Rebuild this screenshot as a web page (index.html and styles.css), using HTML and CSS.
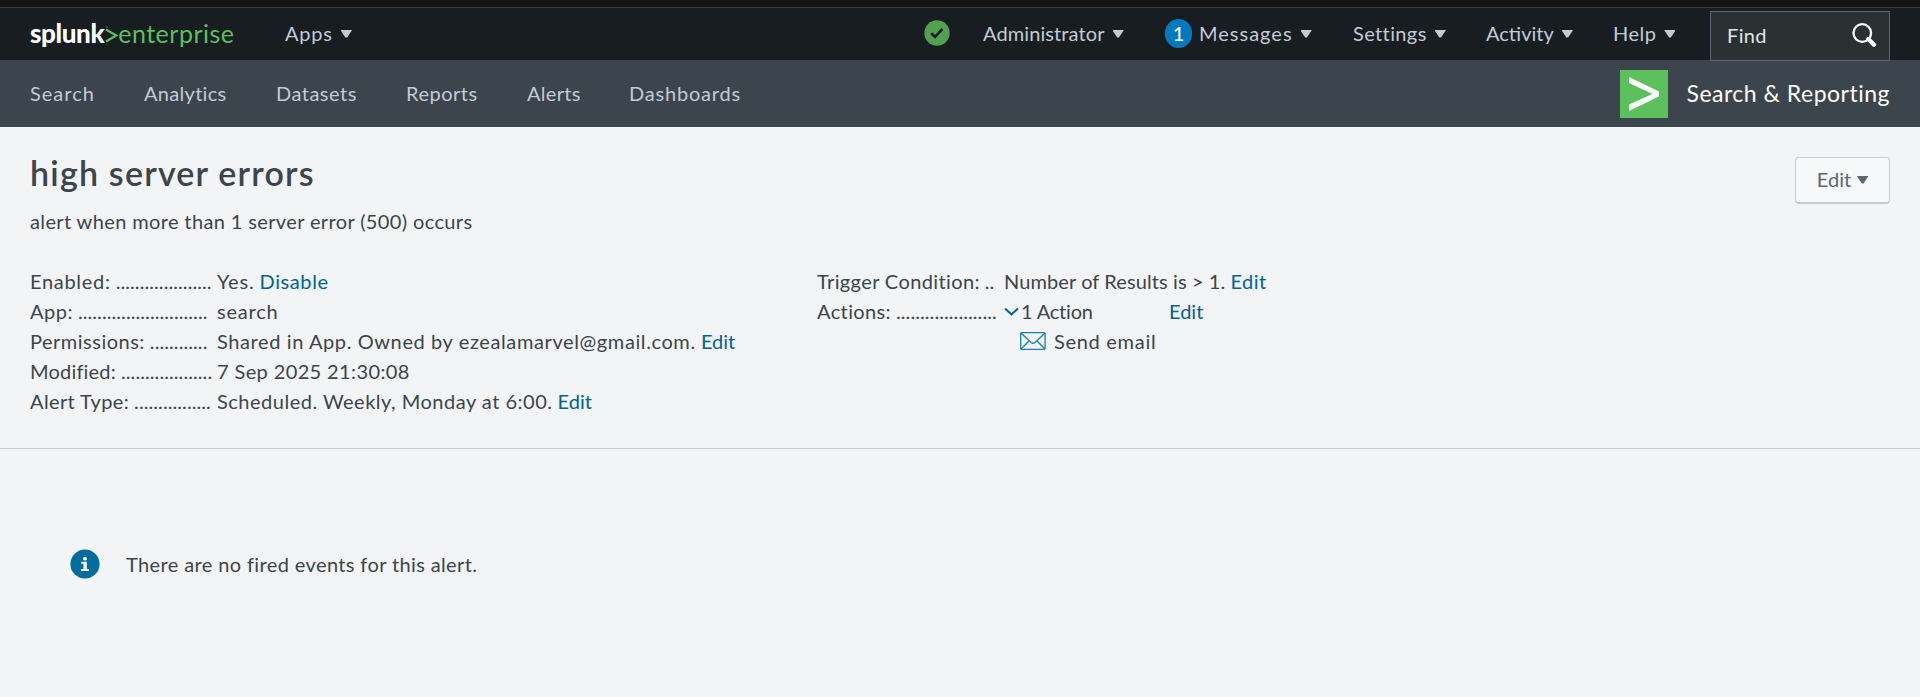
FILE: index.html
```
<!DOCTYPE html>
<html lang="en">
<head>
<meta charset="utf-8">
<title>high server errors | Splunk</title>
<link rel="stylesheet" href="styles.css">
</head>
<body>
<div class="window-edge"></div>
<header class="topbar">
  <div class="topbar-left">
    <a class="logo"><span class="logo-splunk">splunk</span><svg class="logo-mark" width="13" height="20" viewBox="0 0 13 20"><path d="M1 4.5 11.2 10.5 1 16.5" fill="none" stroke="#5cc05c" stroke-width="2.3"/><circle cx="2" cy="2" r="1" fill="#2d6b35"/></svg><span class="logo-product">enterprise</span></a>
    <a class="menu"><span class="ls-8">Apps</span><i class="caret"></i></a>
  </div>
  <nav class="topbar-right">
    <svg class="health" width="26" height="26" viewBox="0 0 26 26"><circle cx="13" cy="13" r="12.7" fill="#53a051"/><path d="M7.2 13.2 11 16.8 18.3 9.2" fill="none" stroke="#171d21" stroke-width="2.6"/></svg>
    <a class="menu"><span class="ls-1">Administrator</span><i class="caret"></i></a>
    <a class="menu"><b class="badge">1</b><span class="ls-10">Messages</span><i class="caret"></i></a>
    <a class="menu"><span class="ls-4">Settings</span><i class="caret"></i></a>
    <a class="menu"><span class="ls-0">Activity</span><i class="caret"></i></a>
    <a class="menu"><span class="ls-5">Help</span><i class="caret"></i></a>
    <div class="find"><span class="ls-4">Find</span><svg width="25" height="25" viewBox="0 0 25 25"><circle cx="10.3" cy="10" r="8.8" fill="none" stroke="#fff" stroke-width="2.3"/><path d="M16.3 16 22 21.7" stroke="#fff" stroke-width="4.4" stroke-linecap="round"/></svg></div>
  </nav>
</header>
<div class="appbar">
  <nav class="tabs">
    <a class="ls-10">Search</a><a class="ls-3">Analytics</a><a class="ls-5">Datasets</a><a class="ls-5">Reports</a><a class="ls-3">Alerts</a><a class="ls-8">Dashboards</a>
  </nav>
  <div class="app">
    <svg width="48" height="48" viewBox="0 0 48 48"><rect width="48" height="48" fill="#5cc05c"/><path d="M9 7 39 21.5V26.500L9 41V34.500L32.500 24 9 13Z" fill="#fff"/></svg>
    <span class="app-name">Search &amp; Reporting</span>
  </div>
</div>
<main>
  <section class="summary">
    <div class="heading">
      <div>
        <h1>high server errors</h1>
        <p>alert when more than 1 server error (500) occurs</p>
      </div>
      <button class="edit"><span>Edit</span><i class="caret"></i></button>
    </div>
    <div class="details">
      <dl class="col">
        <dt><span class="ls-7">Enabled:</span><span class="dots">....................</span></dt>
        <dd><span class="ls-8">Yes.</span> <a class="ls-6">Disable</a></dd>
        <dt><span class="ls-5">App:</span><span class="dots">...........................</span></dt>
        <dd class="ls-8">search</dd>
        <dt><span class="ls-5">Permissions:</span><span class="dots">............</span></dt>
        <dd><span class="ls-6">Shared in App. Owned by ezealamarvel@gmail.com.</span> <a>Edit</a></dd>
        <dt><span class="ls-2">Modified:</span><span class="dots">...................</span></dt>
        <dd class="ls-4">7 Sep 2025 21:30:08</dd>
        <dt><span class="ls-4">Alert Type:</span><span class="dots">................</span></dt>
        <dd><span class="ls-5">Scheduled. Weekly, Monday at 6:00.</span> <a>Edit</a></dd>
      </dl>
      <dl class="col">
        <dt><span class="ls-4">Trigger Condition:</span><span class="dots">..</span></dt>
        <dd><span class="ls-1">Number of Results is &gt; 1.</span> <a class="ls-5">Edit</a></dd>
        <dt><span class="ls-4">Actions:</span><span class="dots">.....................</span></dt>
        <dd>
          <div class="actions"><span class="toggle"><svg width="15" height="10" viewBox="0 0 15 10"><path d="M1 1.500 7.500 7.500 14 1.500" fill="none" stroke="#006297" stroke-width="2"/></svg><span>1 Action</span></span><a>Edit</a></div>
          <div class="action"><svg width="26" height="18" viewBox="0 0 26 18"><g fill="none" stroke="#1a7fb5" stroke-width="1.3"><rect x=".7" y=".7" width="24.400" height="16.600" rx="1"/><path d="M1 1 11 10.500Q13 12 15 10.500L25 1M1 17 9 9M25 17 17 9"/></g></svg><span class="ls-7">Send email</span></div>
        </dd>
      </dl>
    </div>
  </section>
  <section class="notice">
    <svg width="30" height="30" viewBox="0 0 30 30"><circle cx="15" cy="15" r="14.600" fill="#006d9c"/><circle cx="15" cy="9.700" r="1.900" fill="#fff"/><path d="M11.200 12.800H16.800V20H19V22H11.200V20H13.500V14.800H11.200Z" fill="#fff"/></svg>
    <span class="notice-text">There are no fired events for this alert.</span>
  </section>
</main>
</body>
</html>
```
FILE: styles.css
```
* { box-sizing: border-box; }

body {
  margin: 0;
  min-height: 697px;
  background: #f2f4f5;
  color: #3c444d;
  font: 20px/30px Lato, sans-serif;
  white-space: nowrap;
  overflow: hidden;
}

.ls-0 { letter-spacing: 0; }
.ls-1 { letter-spacing: .1px; }
.ls-2 { letter-spacing: .2px; }
.ls-3 { letter-spacing: .3px; }
.ls-4 { letter-spacing: .38px; }
.ls-5 { letter-spacing: .5px; }
.ls-6 { letter-spacing: .6px; }
.ls-7 { letter-spacing: .7px; }
.ls-8 { letter-spacing: .8px; }
.ls-10 { letter-spacing: 1px; }

.window-edge {
  height: 8px;
  background: #141414;
  border-bottom: 1px solid #3b3b3b;
}

.topbar {
  display: flex;
  justify-content: space-between;
  height: 52px;
  padding: 0 30px;
  background: #171d21;
  color: #c3cbd4;
}

.topbar-left {
  display: grid;
  grid-template-columns: 255px auto;
  align-items: center;
  padding-bottom: 2px;
}

.topbar-right {
  display: grid;
  grid-template-columns: 59px 182px 188px 133px 127px 97px 180px;
  grid-template-rows: 50px;
  align-items: center;
}

.logo { display: flex; align-items: center; font-size: 25px; color: #5cc05c; }
.logo-splunk { font-weight: 900; color: #fff; font-size: 26px; letter-spacing: -.4px; }
.logo-mark { margin: 3px 0 0 1px; }
.logo-product { letter-spacing: .5px; }

.menu { display: flex; align-items: center; }

.caret {
  width: 11px;
  height: 8px;
  margin: 1px 0 0 8px;
  background: currentColor;
  clip-path: polygon(0 0, 100% 0, 100% 12%, 58% 100%, 42% 100%, 0 12%);
}

.badge {
  width: 27px;
  height: 29px;
  margin-right: 7px;
  border-radius: 14px;
  background: #007abd;
  color: #fff;
  font-weight: 500;
  line-height: 29px;
  text-align: center;
}

.find {
  display: flex;
  align-items: center;
  justify-content: space-between;
  align-self: start;
  height: 50px;
  margin-top: 3px;
  padding: 0 12px 2px 16px;
  border: 1px solid #5c6773;
  background: #2b3033;
  color: #e1e6eb;
}

.appbar {
  display: flex;
  align-items: center;
  justify-content: space-between;
  height: 67px;
  padding: 0 30px;
  background: #3c444d;
  color: #c3cbd4;
}

.tabs {
  display: grid;
  grid-template-columns: 114px 132px 130px 121px 102px auto;
  padding-bottom: 1px;
}
.app { display: flex; align-items: center; gap: 18px; color: #fff; }
.app-name { padding-bottom: 2px; font-size: 23px; letter-spacing: .5px; }

.summary {
  height: 322px;
  padding: 25px 30px 0;
  border-bottom: 1px solid #c3cbd4;
}

.heading { display: flex; justify-content: space-between; height: 114px; }

h1 { margin: 1px 0 0; font-size: 34px; line-height: 40px; font-weight: 600; letter-spacing: 1.2px; }
p { margin: 13px 0 0; letter-spacing: .37px; }

.edit {
  display: flex;
  align-items: center;
  justify-content: center;
  width: 95px;
  height: 47px;
  margin: 5px 0 0;
  padding: 0 0 2px;
  border: 1px solid #c3cbd4;
  border-bottom-width: 2px;
  border-radius: 4px;
  background: #f7f8fa;
  color: #5c6773;
  font: inherit;
}
.edit .caret { margin-left: 6px; }

.details { display: grid; grid-template-columns: 787px auto; }

.col {
  display: grid;
  grid-template-columns: 180px auto;
  column-gap: 7px;
  align-content: start;
  margin: 0;
}

dt { display: flex; gap: 5px; }
dd { margin: 0; }
.dots { letter-spacing: .08px; }
a { text-decoration: none; }
dd a { color: #006297; }

.actions { display: grid; grid-template-columns: 165px auto; }
.toggle { display: flex; align-items: center; gap: 2px; }
.toggle svg { margin-top: 1px; }
.toggle span { letter-spacing: -.2px; }
.action { display: flex; align-items: center; gap: 8px; padding-left: 16px; }

.notice { display: flex; align-items: center; gap: 26px; padding: 100px 70px 0; }
.notice-text { letter-spacing: .38px; }
```
